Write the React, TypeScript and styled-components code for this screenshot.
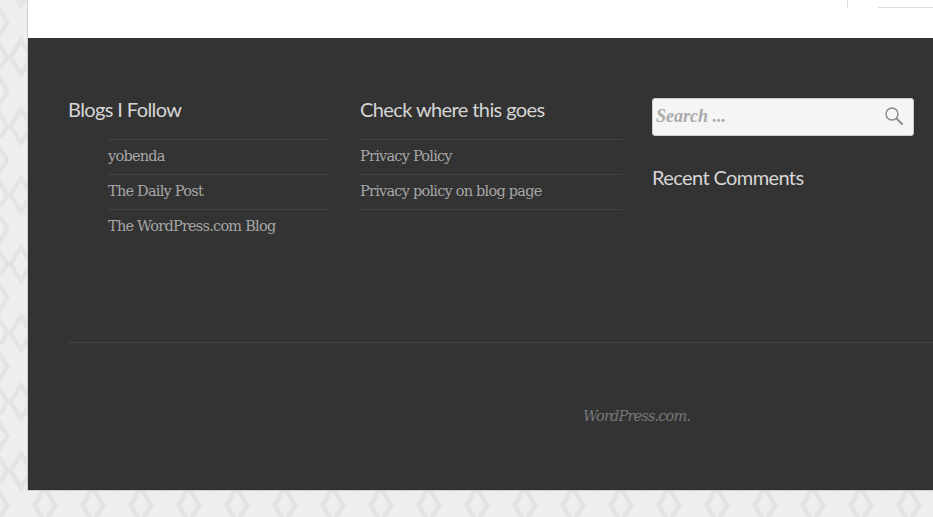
import React from "react";
import styled, { createGlobalStyle } from "styled-components";

const diamond = (x: number, y: number) =>
  `<path d='M${x} ${y - 17}L${x + 10.5} ${y}L${x} ${y + 17}L${x - 10.5} ${y}Z'/>`;
const centers: [number, number][] = [
  [-3, 22], [45, 22], [21, 57], [21, -12],
];
const tile =
  `<svg xmlns='http://www.w3.org/2000/svg' width='48' height='69'><g fill='none' stroke='#e4e4e4' stroke-width='4.4'>` +
  centers.map(([x, y]) => diamond(x, y)).join("") +
  `<path d='M-3 40L7.5 57L-3 74'/></g></svg>`;
const tileUrl = `url("data:image/svg+xml,${encodeURIComponent(tile)}")`;

const Global = createGlobalStyle`
  html, body { margin: 0; padding: 0; height: 517px; overflow: hidden; }
  body { background-color: #eeeeee; background-image: ${tileUrl}; background-repeat: repeat; }
`;

const Page = styled.div`
  width: 933px;
  height: 517px;
  padding-left: 27px;
  box-sizing: border-box;
  overflow: hidden;
`;

const Sheet = styled.div`
  height: 491px;
  box-sizing: border-box;
  border-left: 1px solid #cfcfcf;
  border-bottom: 1px solid #cfcfcf;
  display: flex;
  flex-direction: column;
`;

const TopBand = styled.div`
  height: 38px;
  flex: none;
  background: #fff;
  display: flex;
  align-items: flex-start;
`;

const TopRule = styled.div`
  width: 1px;
  height: 8px;
  margin-left: 819px;
  background: #dddddd;
`;

const TopTab = styled.div`
  width: 55px;
  height: 1px;
  margin: 7px 0 0 30px;
  background: #dddddd;
`;

const Footer = styled.footer`
  flex: 1;
  background: #333333;
  padding: 60px 0 0 40px;
  display: flex;
  flex-direction: column;
`;

const Columns = styled.div`
  display: grid;
  grid-template-columns: repeat(3, 262px);
  column-gap: 30px;
  height: 244px;
`;

const Heading = styled.h2`
  margin: 0 0 16px;
  height: 25px;
  font: 400 20px/23px "Lato", sans-serif;
  letter-spacing: -0.6px;
  color: #d6d6d6;
`;

const Links = styled.ul<{ $indent?: boolean; $closed?: boolean }>`
  list-style: none;
  margin: 0;
  padding: 0 0 0 ${(p) => (p.$indent ? "40px" : "0")};
  ${(p) => (p.$closed ? "border-bottom: 1px solid #444444;" : "")}
`;

const LinkRow = styled.li`
  height: 35px;
  box-sizing: border-box;
  border-top: 1px solid #444444;
  font: 400 14.5px/33px "DejaVu Serif", serif;
  letter-spacing: -0.77px;
  color: #a6a6a6;
`;

const SearchBox = styled.div`
  height: 38px;
  box-sizing: border-box;
  background: #f5f5f5;
  border: 1px solid #cccccc;
  border-radius: 3px;
  display: flex;
  align-items: center;
  justify-content: space-between;
  padding: 0 9px 0 3px;
  margin-bottom: 30px;
`;

const SearchHint = styled.span`
  font: italic 700 18px/1 "Liberation Serif", serif;
  margin-top: -2px;
  color: #aaaaaa;
`;

const SearchIcon = styled.svg`
  width: 20px;
  height: 20px;
  display: block;
  margin-top: -2px;
`;

const Rule = styled.hr`
  margin: 0;
  border: 0;
  height: 1px;
  background: #444444;
`;

const Credit = styled.p`
  margin: 61px 0 0 515px;
  font: italic 400 14.5px/24px "DejaVu Serif", serif;
  letter-spacing: -0.83px;
  color: #777777;
`;

export default function App() {
  return (
    <Page>
      <Global />
      <Sheet>
        <TopBand>
          <TopRule />
          <TopTab />
        </TopBand>
        <Footer>
          <Columns>
            <section>
              <Heading>Blogs I Follow</Heading>
              <Links $indent>
                <LinkRow>yobenda</LinkRow>
                <LinkRow>The Daily Post</LinkRow>
                <LinkRow>The WordPress.com Blog</LinkRow>
              </Links>
            </section>
            <section>
              <Heading>Check where this goes</Heading>
              <Links $closed>
                <LinkRow>Privacy Policy</LinkRow>
                <LinkRow>Privacy policy on blog page</LinkRow>
              </Links>
            </section>
            <section>
              <SearchBox>
                <SearchHint>Search ...</SearchHint>
                <SearchIcon viewBox="0 0 20 20" fill="none" stroke="#888888">
                  <circle cx="8" cy="8" r="6" strokeWidth="1.4" />
                  <path d="M12.4 12.4L18.5 18.5" strokeWidth="2" />
                </SearchIcon>
              </SearchBox>
              <Heading>Recent Comments</Heading>
            </section>
          </Columns>
          <Rule />
          <Credit>WordPress.com.</Credit>
        </Footer>
      </Sheet>
    </Page>
  );
}
